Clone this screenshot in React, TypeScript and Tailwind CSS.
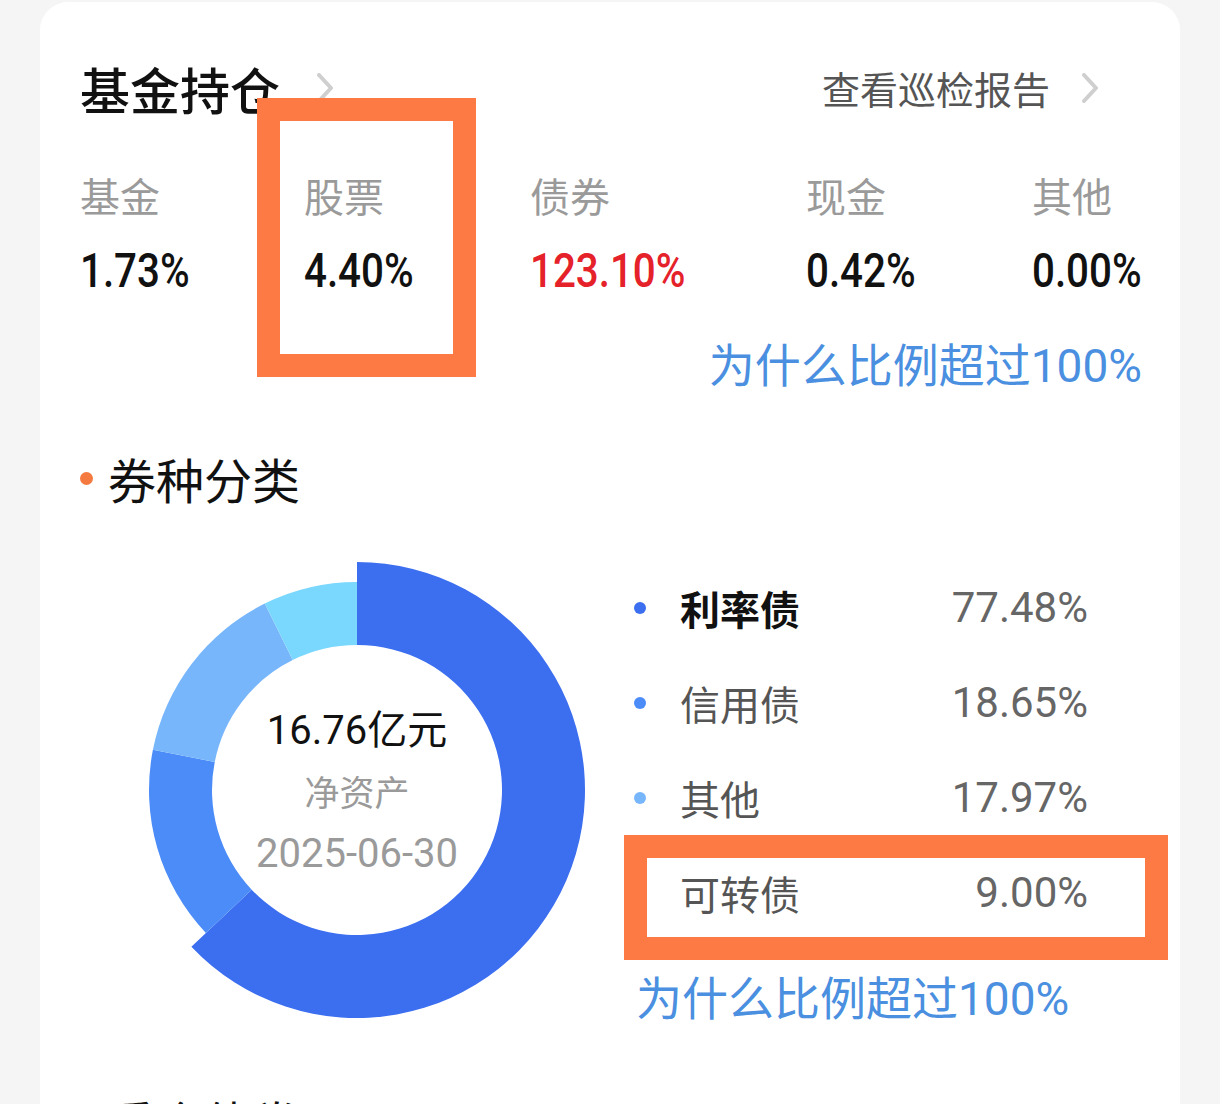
import React from "react"

const cjk = "'Noto Sans CJK SC', sans-serif"
const num = "Roboto, 'Noto Sans CJK SC', sans-serif"

const holdings = [
    { label: "基金", value: "1.73%", red: false },
    { label: "股票", value: "4.40%", red: false },
    { label: "债券", value: "123.10%", red: true },
    { label: "现金", value: "0.42%", red: false },
    { label: "其他", value: "0.00%", red: false },
]

const segments = [
    { label: "利率债", value: 77.48, text: "77.48%", color: "#3c6ef0", dot: "bg-[#3c6ef0]", big: true },
    { label: "信用债", value: 18.65, text: "18.65%", color: "#4b8cf8", dot: "bg-[#4b8cf8]", big: false },
    { label: "其他", value: 17.97, text: "17.97%", color: "#78b6fc", dot: "bg-[#78b6fc]", big: false },
    { label: "可转债", value: 9.0, text: "9.00%", color: "#7ad7fd", dot: "bg-[#7ad7fd]", big: false },
]

const Chevron = () => (
    <svg width="16" height="30" viewBox="0 0 16 30" fill="none">
        <polyline points="2,2 14,15 2,28" stroke="#cfcfcf" strokeWidth="4" strokeLinecap="round" strokeLinejoin="round" />
    </svg>
)

// one ring slice, angles in degrees clockwise from 12 o'clock
const slice = (c: number, r0: number, r1: number, a0: number, a1: number) => {
    const p = (r: number, a: number) => {
        const t = (a * Math.PI) / 180
        return `${(c + r * Math.sin(t)).toFixed(2)} ${(c - r * Math.cos(t)).toFixed(2)}`
    }
    const large = a1 - a0 > 180 ? 1 : 0
    return `M ${p(r1, a0)} A ${r1} ${r1} 0 ${large} 1 ${p(r1, a1)} L ${p(r0, a1)} A ${r0} ${r0} 0 ${large} 0 ${p(r0, a0)} Z`
}

const Donut = () => {
    const total = segments.reduce((s, x) => s + x.value, 0)
    let start = 0
    return (
        <div className="relative w-[460px] h-[460px] shrink-0">
            <svg width="460" height="460" viewBox="0 0 460 460">
                {segments.map((s) => {
                    const end = start + (s.value / total) * 360
                    const d = slice(230, 145, s.big ? 228 : 208, start, end)
                    start = end
                    return <path key={s.label} d={d} fill={s.color} />
                })}
            </svg>
            <div className="absolute inset-0 flex flex-col items-center justify-center pt-[4px]" style={{ fontFamily: num }}>
                <div className="text-[40px] leading-[40px] text-[#111] mb-[26px]">16.76亿元</div>
                <div className="text-[35px] leading-[35px] text-[#9a9a9a] mb-[22px]">净资产</div>
                <div className="text-[40px] leading-[40px] text-[#9a9a9a]">2025-06-30</div>
            </div>
        </div>
    )
}

const WhyLink = ({ className }: { className: string }) => (
    <div className={`text-[46px] leading-[46px] text-[#4a8fe0] ${className}`} style={{ fontFamily: num }}>
        为什么比例超过100%
    </div>
)

export default function App() {
    return (
        <div className="relative w-[1220px] h-[1104px] overflow-hidden bg-[#f5f5f5]" style={{ fontFamily: cjk }}>
            <div className="mx-[40px] mt-[2px] h-[1200px] bg-white rounded-t-[28px] px-[40px] pt-[61px]">
                {/* header */}
                <div className="flex items-center justify-between h-[50px]">
                    <div className="flex items-center gap-[37px]">
                        <span className="text-[50px] leading-[50px] font-medium text-[#111]">基金持仓</span>
                        <Chevron />
                    </div>
                    <div className="flex items-center gap-[32px] mr-[42px]">
                        <span className="text-[38px] leading-[38px] text-[#555]">查看巡检报告</span>
                        <Chevron />
                    </div>
                </div>

                {/* holdings */}
                <div className="grid grid-cols-[224px_226px_276px_226px_1fr] mt-[62px]">
                    {holdings.map((h) => (
                        <div key={h.label} className="flex flex-col gap-[32px]">
                            <span className="text-[40px] leading-[40px] text-[#9a9a9a]">{h.label}</span>
                            <span
                                className={`inline-block whitespace-nowrap origin-left scale-x-[0.84] text-[48px] leading-[48px] font-medium ${h.red ? "text-[#e5212a]" : "text-[#111]"}`}
                                style={{ fontFamily: num }}
                            >
                                {h.value}
                            </span>
                        </div>
                    ))}
                </div>
                <WhyLink className="mt-[48px] text-right -mr-[2px]" />

                {/* bond types */}
                <div className="flex items-center gap-[15px] mt-[65px] h-[48px]">
                    <span className="w-[13px] h-[13px] rounded-full bg-[#f47a3f]" />
                    <span className="text-[48px] leading-[48px] text-[#111]">券种分类</span>
                </div>

                <div className="flex mt-[58px]">
                    <div className="ml-[47px]">
                        <Donut />
                    </div>
                    <div className="ml-[47px] flex flex-col">
                        <div className="w-[454px] flex flex-col">
                            {segments.map((s) => (
                                <div key={s.label} className="flex items-center h-[95px]">
                                    <span className={`w-[12px] h-[12px] rounded-full ${s.dot}`} />
                                    <span
                                        className={`ml-[34px] text-[40px] leading-[40px] ${s.big ? "font-bold text-[#111]" : "text-[#555]"}`}
                                    >
                                        {s.label}
                                    </span>
                                    <span className="ml-auto text-[42px] leading-[42px] text-[#666]" style={{ fontFamily: num }}>
                                        {s.text}
                                    </span>
                                </div>
                            ))}
                        </div>
                        <WhyLink className="mt-[36px] ml-[2px]" />
                    </div>
                </div>

                <div className="flex items-center gap-[15px] mt-[75px] h-[48px]">
                    <span className="w-[13px] h-[13px] rounded-full bg-[#f47a3f]" />
                    <span className="text-[48px] leading-[48px] text-[#111]">重仓债券</span>
                </div>
            </div>

            {/* annotation boxes */}
            <div className="absolute left-[257px] top-[98px] w-[219px] h-[279px] border-[23px] border-[#fe7a44]" />
            <div className="absolute left-[624px] top-[835px] w-[544px] h-[125px] border-[23px] border-[#fe7a44]" />
        </div>
    )
}
